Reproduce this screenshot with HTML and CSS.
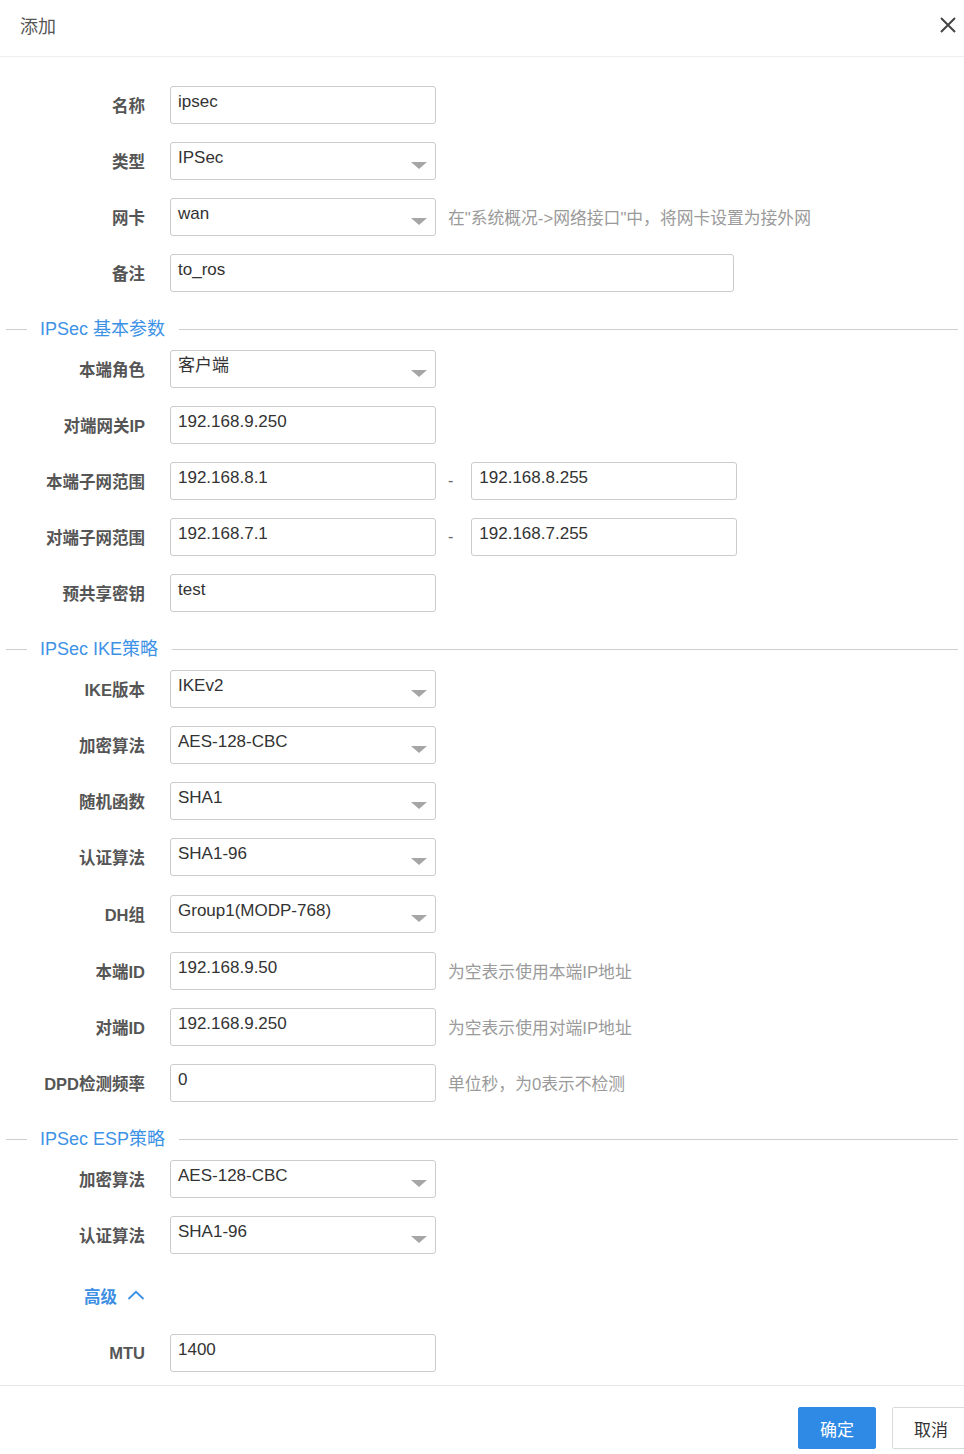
FILE: index.html
```html
<!DOCTYPE html>
<html lang="zh-CN">
<head>
<meta charset="utf-8">
<title>添加</title>
<link rel="stylesheet" href="styles.css">
</head>
<body>
<div class="dialog">
  <div class="header">
    <div class="title">添加</div>
    <svg class="close" width="18" height="18" viewBox="0 0 18 18"><path d="M2 2L16 16M16 2L2 16" stroke="#444" stroke-width="2" fill="none"/></svg>
  </div>
  <div class="body">
    <div class="row"><div class="label">名称</div><div class="field">ipsec</div></div>
    <div class="row"><div class="label">类型</div><div class="field select"><span>IPSec</span><i class="caret"></i></div></div>
    <div class="row"><div class="label">网卡</div><div class="field select"><span>wan</span><i class="caret"></i></div><div class="hint">在"系统概况-&gt;网络接口"中，将网卡设置为接外网</div></div>
    <div class="row"><div class="label">备注</div><div class="field wide">to_ros</div></div>

    <div class="divider"><span class="line short"></span><span class="dtitle">IPSec 基本参数</span><span class="line"></span></div>
    <div class="row"><div class="label">本端角色</div><div class="field select"><span>客户端</span><i class="caret"></i></div></div>
    <div class="row"><div class="label">对端网关IP</div><div class="field">192.168.9.250</div></div>
    <div class="row"><div class="label">本端子网范围</div><div class="field">192.168.8.1</div><span class="dash">-</span><div class="field">192.168.8.255</div></div>
    <div class="row"><div class="label">对端子网范围</div><div class="field">192.168.7.1</div><span class="dash">-</span><div class="field">192.168.7.255</div></div>
    <div class="row"><div class="label">预共享密钥</div><div class="field">test</div></div>

    <div class="divider"><span class="line short"></span><span class="dtitle">IPSec IKE策略</span><span class="line"></span></div>
    <div class="row"><div class="label">IKE版本</div><div class="field select"><span>IKEv2</span><i class="caret"></i></div></div>
    <div class="row"><div class="label">加密算法</div><div class="field select"><span>AES-128-CBC</span><i class="caret"></i></div></div>
    <div class="row"><div class="label">随机函数</div><div class="field select"><span>SHA1</span><i class="caret"></i></div></div>
    <div class="row loose"><div class="label">认证算法</div><div class="field select"><span>SHA1-96</span><i class="caret"></i></div></div>
    <div class="row loose"><div class="label">DH组</div><div class="field select"><span>Group1(MODP-768)</span><i class="caret"></i></div></div>
    <div class="row"><div class="label">本端ID</div><div class="field">192.168.9.50</div><div class="hint">为空表示使用本端IP地址</div></div>
    <div class="row"><div class="label">对端ID</div><div class="field">192.168.9.250</div><div class="hint">为空表示使用对端IP地址</div></div>
    <div class="row"><div class="label">DPD检测频率</div><div class="field">0</div><div class="hint">单位秒，为0表示不检测</div></div>

    <div class="divider"><span class="line short"></span><span class="dtitle">IPSec ESP策略</span><span class="line"></span></div>
    <div class="row"><div class="label">加密算法</div><div class="field select"><span>AES-128-CBC</span><i class="caret"></i></div></div>
    <div class="row"><div class="label">认证算法</div><div class="field select"><span>SHA1-96</span><i class="caret"></i></div></div>

    <div class="advanced"><div class="adv-label">高级<svg class="chev" width="18" height="10" viewBox="0 0 18 10"><path d="M1.5 9L9 1.8L16.5 9" stroke="#3d8fe3" stroke-width="1.8" fill="none"/></svg></div></div>
    <div class="row last"><div class="label">MTU</div><div class="field">1400</div></div>
  </div>
  <div class="footer">
    <div class="buttons">
      <div class="btn primary">确定</div>
      <div class="btn">取消</div>
    </div>
  </div>
</div>
</body>
</html>
```
FILE: styles.css
```css
html, body {
  margin: 0;
  padding: 0;
  background: #fff;
  overflow: hidden;
}
body {
  font-family: "Liberation Sans", "Noto Sans CJK SC", sans-serif;
  color: #333;
}
.dialog {
  width: 964px;
}
.header {
  height: 57px;
  border-bottom: 1px solid #eeeeee;
  display: flex;
  align-items: center;
  justify-content: space-between;
  padding: 0 7px 6px 20px;
  box-sizing: border-box;
}
.title {
  font-size: 18px;
  color: #555;
  font-family: "Noto Sans CJK SC", sans-serif;
}
.close {
  display: block;
}
.body {
  padding: 29px 0 13px 0;
}
.row {
  display: flex;
  align-items: center;
  height: 38px;
  margin-bottom: 18px;
}
.row.loose {
  margin-bottom: 19px;
}
.row.last {
  margin-bottom: 0;
}
.label {
  width: 145px;
  flex-shrink: 0;
  margin-right: 25px;
  text-align: right;
  font-size: 16.5px;
  font-weight: bold;
  color: #555;
  font-family: "Liberation Sans", "Noto Sans CJK SC", sans-serif;
}
.field {
  width: 266px;
  height: 38px;
  box-sizing: border-box;
  border: 1px solid #cccccc;
  border-radius: 3px;
  padding: 4px 8px 0 7px;
  font-size: 17px;
  line-height: 22px;
  color: #333;
  flex-shrink: 0;
  display: flex;
  align-items: flex-start;
}
.field.wide {
  width: 564px;
}
.select {
  justify-content: space-between;
}
.caret {
  align-self: center;
  width: 0;
  height: 0;
  margin-top: 4px;
  border-left: 8px solid transparent;
  border-right: 8px solid transparent;
  border-top: 7px solid #a6a6a6;
}
.hint {
  margin-left: 12px;
  font-size: 16.8px;
  color: #9a9a9a;
  white-space: nowrap;
}
.dash {
  margin-left: 12px;
  margin-right: 18px;
  font-size: 16px;
  color: #666;
}
.divider {
  display: flex;
  align-items: center;
  height: 24px;
  margin: 0 6px 9px 6px;
  padding-top: 7px;
  box-sizing: content-box;
}
.line {
  flex: 1;
  height: 1px;
  background: #cfcfcf;
}
.line.short {
  flex: 0 0 21px;
}
.dtitle {
  padding: 0 14px 0 13px;
  font-size: 18px;
  color: #3d92e6;
  line-height: 24px;
}
.advanced {
  display: flex;
  height: 38px;
  padding-top: 5px;
  margin-bottom: 19px;
  align-items: center;
}
.adv-label {
  width: 145px;
  display: flex;
  justify-content: flex-end;
  align-items: center;
  font-size: 16.5px;
  font-weight: bold;
  color: #3d8fe3;
  font-family: "Noto Sans CJK SC", sans-serif;
}
.chev {
  margin-left: 10px;
  margin-top: -2px;
}
.footer {
  border-top: 1px solid #e8e8e8;
  padding: 21px 0 6px 0;
  display: flex;
  justify-content: flex-end;
}
.buttons {
  display: flex;
  gap: 16px;
  margin-right: -6px;
}
.btn {
  width: 78px;
  height: 42px;
  box-sizing: border-box;
  border: 1px solid #d9d9d9;
  border-radius: 2px;
  display: flex;
  align-items: center;
  justify-content: center;
  font-size: 17px;
  color: #333;
  font-family: "Noto Sans CJK SC", sans-serif;
  background: #fff;
}
.btn.primary {
  background: #2f8ae5;
  border-color: #2f8ae5;
  color: #fff;
}
```
